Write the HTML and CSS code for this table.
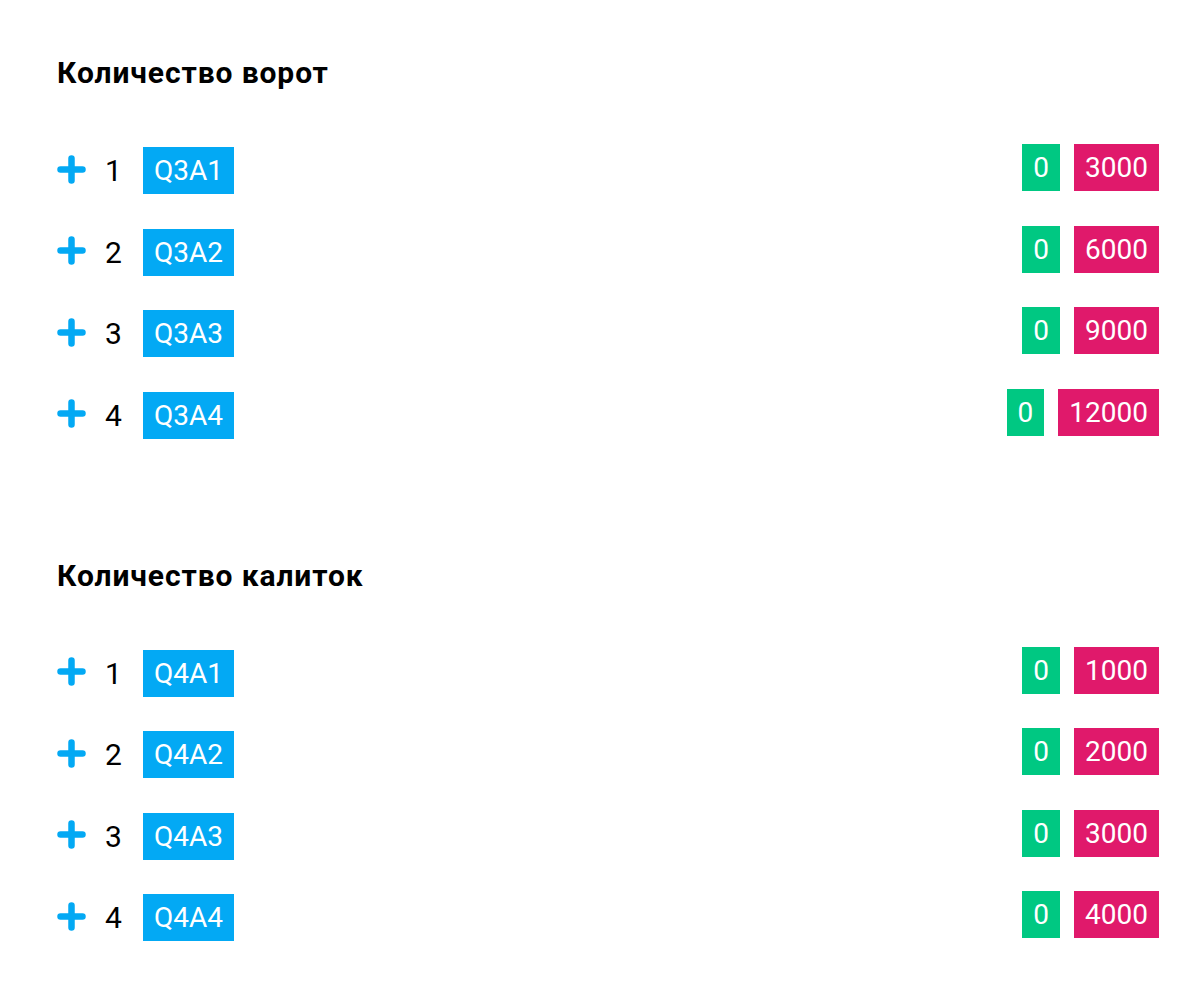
FILE: index.html
```html
<!DOCTYPE html>
<html lang="ru">
<head>
<meta charset="utf-8">
<link rel="stylesheet" href="styles.css">
</head>
<body>
<div class="page">
  <section class="section">
    <h2 class="title">Количество ворот</h2>
    <div class="rows">
      <div class="row">
        <div class="left">
          <svg class="plus" viewBox="0 0 29 29"><path d="M14.5 3.5V25.5M3.5 14.5H25.5"/></svg>
          <span class="num">1</span>
          <span class="code">Q3A1</span>
        </div>
        <div class="right"><span class="box green">0</span><span class="box pink">3000</span></div>
      </div>
      <div class="row">
        <div class="left">
          <svg class="plus" viewBox="0 0 29 29"><path d="M14.5 3.5V25.5M3.5 14.5H25.5"/></svg>
          <span class="num">2</span>
          <span class="code">Q3A2</span>
        </div>
        <div class="right"><span class="box green">0</span><span class="box pink">6000</span></div>
      </div>
      <div class="row">
        <div class="left">
          <svg class="plus" viewBox="0 0 29 29"><path d="M14.5 3.5V25.5M3.5 14.5H25.5"/></svg>
          <span class="num">3</span>
          <span class="code">Q3A3</span>
        </div>
        <div class="right"><span class="box green">0</span><span class="box pink">9000</span></div>
      </div>
      <div class="row">
        <div class="left">
          <svg class="plus" viewBox="0 0 29 29"><path d="M14.5 3.5V25.5M3.5 14.5H25.5"/></svg>
          <span class="num">4</span>
          <span class="code">Q3A4</span>
        </div>
        <div class="right"><span class="box green">0</span><span class="box pink">12000</span></div>
      </div>
    </div>
  </section>
  <section class="section">
    <h2 class="title">Количество калиток</h2>
    <div class="rows">
      <div class="row">
        <div class="left">
          <svg class="plus" viewBox="0 0 29 29"><path d="M14.5 3.5V25.5M3.5 14.5H25.5"/></svg>
          <span class="num">1</span>
          <span class="code">Q4A1</span>
        </div>
        <div class="right"><span class="box green">0</span><span class="box pink">1000</span></div>
      </div>
      <div class="row">
        <div class="left">
          <svg class="plus" viewBox="0 0 29 29"><path d="M14.5 3.5V25.5M3.5 14.5H25.5"/></svg>
          <span class="num">2</span>
          <span class="code">Q4A2</span>
        </div>
        <div class="right"><span class="box green">0</span><span class="box pink">2000</span></div>
      </div>
      <div class="row">
        <div class="left">
          <svg class="plus" viewBox="0 0 29 29"><path d="M14.5 3.5V25.5M3.5 14.5H25.5"/></svg>
          <span class="num">3</span>
          <span class="code">Q4A3</span>
        </div>
        <div class="right"><span class="box green">0</span><span class="box pink">3000</span></div>
      </div>
      <div class="row">
        <div class="left">
          <svg class="plus" viewBox="0 0 29 29"><path d="M14.5 3.5V25.5M3.5 14.5H25.5"/></svg>
          <span class="num">4</span>
          <span class="code">Q4A4</span>
        </div>
        <div class="right"><span class="box green">0</span><span class="box pink">4000</span></div>
      </div>
    </div>
  </section>
</div>
</body>
</html>
```

FILE: styles.css
```css
html, body {
  margin: 0;
  padding: 0;
  background: #ffffff;
}

body {
  font-family: Roboto, "Liberation Sans", Arial, sans-serif;
  color: #000000;
}

.page {
  padding: 56px 39px 0 57px;
}

.section + .section {
  margin-top: 120px;
}

.title {
  margin: 0 0 57px 0;
  font-size: 30px;
  line-height: 34px;
  font-weight: 700;
  letter-spacing: 0.9px;
}

.rows {
  display: flex;
  flex-direction: column;
  gap: 34.5px;
}

.row {
  display: flex;
  justify-content: space-between;
  align-items: flex-start;
  height: 47px;
}

.left {
  display: flex;
  align-items: center;
  height: 47px;
}

.plus {
  width: 29px;
  height: 29px;
  margin-top: -3px;
  fill: none;
  stroke: #03a9f4;
  stroke-width: 6.5;
  stroke-linecap: round;
}

.num {
  font-size: 30px;
  line-height: 47px;
  margin-left: 19px;
  width: 38px;
}

.code {
  background: #03a9f4;
  color: #ffffff;
  font-size: 28px;
  line-height: 47px;
  padding: 0 11px;
}

.right {
  display: flex;
  gap: 14px;
  margin-top: -3px;
}

.box {
  color: #ffffff;
  font-size: 28px;
  line-height: 47px;
  padding: 0 11px;
}

.green {
  background: #00c882;
}

.pink {
  background: #e0196b;
}
```
